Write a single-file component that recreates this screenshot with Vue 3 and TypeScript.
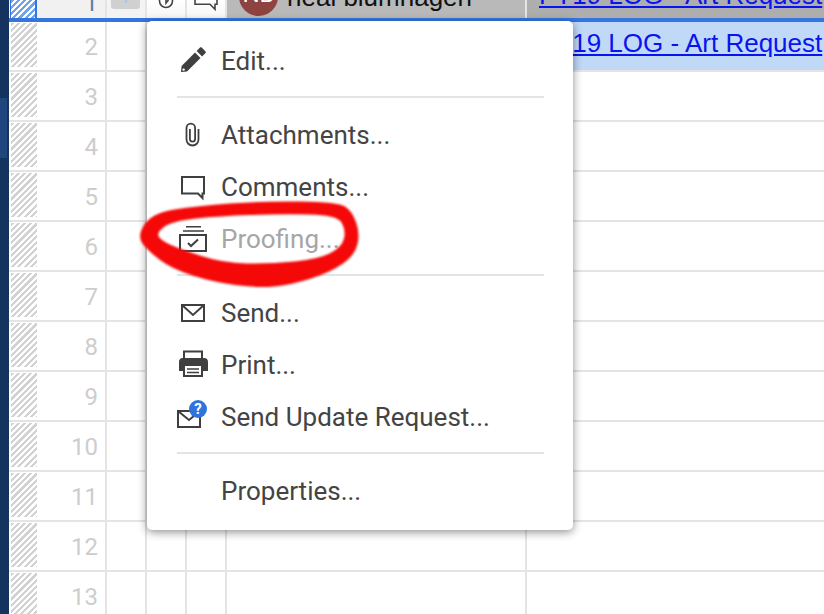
<script setup lang="ts">
const rows: number[] = [2, 3, 4, 5, 6, 7, 8, 9, 10, 11, 12, 13]
const linkText = 'FY19 LOG - Art Request'

type Pt = [number, number]

// hand-drawn marker ring, traced from the screenshot
const outer: Pt[] = [
  [137, 236], [152, 213], [197, 206], [263, 201], [338, 202], [352, 211], [360, 233],
  [355, 255], [331, 272], [291, 285], [257, 288], [213, 282], [172, 269], [148, 251],
]
const inner: Pt[] = [
  [156, 233], [172, 221], [220, 216], [280, 214], [337, 215], [346, 230], [342, 247],
  [319, 259], [270, 264], [223, 263], [180, 249], [162, 241],
]

const smooth = (pts: Pt[]): string => {
  const mid = (a: Pt, b: Pt): string => `${(a[0] + b[0]) / 2} ${(a[1] + b[1]) / 2}`
  let d = `M${mid(pts[pts.length - 1], pts[0])}`
  pts.forEach((p, i) => {
    d += `Q${p[0]} ${p[1]} ${mid(p, pts[(i + 1) % pts.length])}`
  })
  return d + 'Z'
}

const ringPath = smooth(outer) + smooth(inner)
</script>

<template>
  <div class="page">
    <aside class="sidebar"><div class="sidebar-active"></div></aside>

    <main class="sheet">
      <div class="row row-selected">
        <div class="cell head-cell">
          <div class="hatch hatch-selected"></div>
          <span class="row-num">1</span>
        </div>
        <div class="cell flag-cell"><div class="flag-box"><i></i></div></div>
        <div class="cell icon-cell">
          <svg width="20" height="20" viewBox="0 0 20 20" fill="none" stroke="#444" stroke-width="1.6">
            <path d="M3.500 0v1a6.500 6.500 0 0 0 13 0V0" />
            <path d="M10 0v3l2.500-3" />
          </svg>
        </div>
        <div class="cell icon-cell">
          <svg width="26" height="12" viewBox="0 0 26 12" fill="none" stroke="#444" stroke-width="1.6">
            <path d="M2 0v4.200h15l5 5v-5h2V0" />
          </svg>
        </div>
        <div class="cell name-cell">
          <div class="avatar">NB</div>
          <span class="name">neal blumhagen</span>
        </div>
        <div class="cell link-cell link-cell-selected"><a class="link">{{ linkText }}</a></div>
      </div>

      <div v-for="n in rows" :key="n" class="row">
        <div class="cell head-cell">
          <div class="hatch"></div>
          <span class="row-num">{{ n }}</span>
        </div>
        <div class="cell"></div>
        <div class="cell"></div>
        <div class="cell"></div>
        <div class="cell"></div>
        <div class="cell link-cell" :class="{ 'link-cell-active': n === 2 }">
          <a v-if="n === 2" class="link">{{ linkText }}</a>
        </div>
      </div>
    </main>

    <div class="menu">
      <div class="item">
        <svg class="icon" viewBox="0 0 30 30">
          <path fill="#3f3f3f" d="M4 26l.6-6L18 6.600l5.500 5.500L10 25.400z" />
          <path fill="#3f3f3f" d="M19.600 5l3.400-3.400c.5-.5 1.200-.5 1.700 0l3.800 3.800c.5.5.5 1.200 0 1.700l-3.400 3.400z" />
          <circle cx="6.600" cy="23.600" r="1.200" fill="#fff" />
        </svg>
        <span>Edit...</span>
      </div>
      <div class="sep"></div>
      <div class="item">
        <svg class="icon" viewBox="0 0 30 30" fill="none" stroke="#3f3f3f" stroke-width="1.8">
          <path d="M21.500 9v10.500a6 6 0 0 1-12 0V8a4.300 4.300 0 0 1 8.600 0v11a2.600 2.600 0 0 1-5.200 0V9" />
        </svg>
        <span>Attachments...</span>
      </div>
      <div class="item">
        <svg class="icon" viewBox="0 0 30 30" fill="none" stroke="#3f3f3f" stroke-width="2">
          <path d="M5 5h22v16.500h-1.500v4.500l-4.500-4.500H5z" />
        </svg>
        <span>Comments...</span>
      </div>
      <div class="item item-disabled">
        <svg class="icon" viewBox="0 0 30 30" fill="none" stroke="#3f3f3f" stroke-width="2">
          <path stroke-width="1.500" d="M9 2.800h15M6 7h21" />
          <rect x="3" y="11" width="26" height="16" />
          <path d="M11 19l3 3 7-6.500" />
        </svg>
        <span>Proofing...</span>
      </div>
      <div class="sep"></div>
      <div class="item">
        <svg class="icon" viewBox="0 0 30 30" fill="none" stroke="#3f3f3f" stroke-width="2">
          <rect x="5" y="7" width="22" height="16" />
          <path d="M5 7l11 10L27 7" />
        </svg>
        <span>Send...</span>
      </div>
      <div class="item">
        <svg class="icon" viewBox="0 0 30 30">
          <path fill="none" stroke="#3f3f3f" stroke-width="2" d="M7 9V1.500h18V9" />
          <path fill="#3f3f3f" d="M5 8h22a4 4 0 0 1 4 4v9H2v-9a4 4 0 0 1 3-4z" />
          <rect x="7" y="15" width="18" height="11" fill="#fff" stroke="#3f3f3f" stroke-width="2" />
          <path stroke="#3f3f3f" stroke-width="1.600" d="M10 19h12M10 22.500h12" />
        </svg>
        <span>Print...</span>
      </div>
      <div class="item">
        <div class="icon update-icon">
          <svg viewBox="0 0 30 30" fill="none" stroke="#3f3f3f" stroke-width="2">
            <rect x="1" y="9" width="22" height="16" />
            <path d="M1 9l11 9 11-9" />
            <circle cx="21" cy="7" r="9" fill="#2f74dd" stroke="none" />
          </svg>
          <b class="update-q">?</b>
        </div>
        <span>Send Update Request...</span>
      </div>
      <div class="sep"></div>
      <div class="item">
        <div class="icon"></div>
        <span>Properties...</span>
      </div>
    </div>

    <svg class="scribble" width="824" height="614" viewBox="0 0 824 614">
      <path fill="#f50808" fill-rule="evenodd" :d="ringPath" />
    </svg>
  </div>
</template>

<style scoped>
.page {
  position: relative;
  display: flex;
  width: 824px;
  height: 614px;
  overflow: hidden;
  background: #fff;
  font-family: Roboto, "Liberation Sans", sans-serif;
}

.sidebar {
  flex: 0 0 9px;
  padding-top: 98px;
  background: #14335f;
}

.sidebar-active {
  width: 7px;
  height: 60px;
  background: #20467f;
}

.sheet {
  flex: 1;
  min-width: 0;
}

.row {
  display: grid;
  grid-template-columns: 98px 40px 40px 40px 300px 1fr;
  height: 50px;
  border-bottom: 2px solid #e4e4e4;
  box-sizing: border-box;
}

.cell {
  position: relative;
  border-right: 2px solid #e4e4e4;
  overflow: hidden;
}

.head-cell {
  display: flex;
  align-items: center;
  justify-content: space-between;
  padding: 2px 7px 4px 2px;
}

.hatch {
  width: 26px;
  height: 44px;
  background: repeating-linear-gradient(135deg, #d2d2d2 0 2.200px, #fff 2.200px 4.400px);
}

.row-num {
  margin-top: 4px;
  color: #cdcdcd;
  font-size: 24px;
}

.row-selected {
  height: 22px;
  border-bottom: 4px solid #3575e0;
}

.row-selected .head-cell {
  align-items: flex-end;
  padding: 0 7px 0 1px;
  background: #f1f1f1;
}

.hatch-selected {
  width: 24px;
  height: 18px;
  border: solid #3575e0;
  border-width: 0 2px 0 1px;
  background: repeating-linear-gradient(135deg, #6ea3f0 0 2.200px, #fff 2.200px 4.400px);
}

.row-selected .row-num {
  margin: 0 0 5px;
  height: 14px;
  line-height: 8px;
  color: #5e7fa9;
}

.flag-cell {
  padding: 0 5px 0 4px;
  background: #f3f3f3;
}

.flag-box {
  display: flex;
  justify-content: center;
  height: 9px;
  border-radius: 0 0 3px 3px;
  background: #d0d0d0;
}

.flag-box i {
  width: 2px;
  height: 3px;
  background: #a9c4e8;
}

.icon-cell {
  display: flex;
  justify-content: center;
  background: linear-gradient(#fff, #f6f6f6);
}

.icon-cell svg {
  display: block;
}

.name-cell {
  display: flex;
  align-items: flex-end;
  background: #b9b9b9;
}

.avatar {
  flex: none;
  display: flex;
  align-items: flex-end;
  justify-content: center;
  width: 39px;
  height: 39px;
  margin: 0 9px 2px 12px;
  padding-bottom: 6px;
  box-sizing: border-box;
  border-radius: 50%;
  background: #8f4341;
  color: #fff;
  font-size: 24px;
  line-height: 31px;
}

.name {
  flex: none;
  margin-bottom: 11px;
  color: #111;
  font-family: "Liberation Sans", Arial, sans-serif;
  font-size: 26px;
  line-height: 20px;
}

.link-cell {
  display: flex;
  align-items: center;
  border-right: 0;
  padding-left: 12px;
  white-space: nowrap;
}

.link-cell-selected {
  align-items: flex-end;
  background: #aeaeae;
}

.link-cell-active {
  background: #c0d9f7;
}

.link {
  color: #0a14ee;
  font-family: "Liberation Sans", Arial, sans-serif;
  font-size: 26px;
  text-decoration: underline;
  line-height: 30px;
}

.link-cell-active .link {
  margin-top: -6px;
}

.link-cell-selected .link {
  margin-bottom: 8px;
}

.menu {
  position: absolute;
  left: 147px;
  top: 21px;
  width: 426px;
  height: 509px;
  padding: 14px 0 13px;
  box-sizing: border-box;
  border-radius: 5px;
  background: #fff;
  box-shadow: 0 2px 10px rgba(0, 0, 0, 0.45);
}

.item {
  display: flex;
  align-items: center;
  gap: 14px;
  height: 52px;
  padding-left: 30px;
  color: #444;
  font-size: 26px;
}

.item-disabled {
  color: #a6a6a6;
}

.icon {
  flex: none;
  display: block;
  width: 30px;
  height: 30px;
  overflow: visible;
}

.update-icon {
  position: relative;
}

.update-icon svg {
  display: block;
  overflow: visible;
}

.update-q {
  position: absolute;
  left: 15px;
  top: -2px;
  width: 12px;
  color: #fff;
  font-size: 15px;
  line-height: 18px;
  text-align: center;
}

.sep {
  height: 2px;
  margin: 9px 29px 11px 30px;
  background: #e4e4e4;
}

.scribble {
  position: absolute;
  left: 0;
  top: 0;
  filter: blur(0.8px);
  pointer-events: none;
}
</style>
